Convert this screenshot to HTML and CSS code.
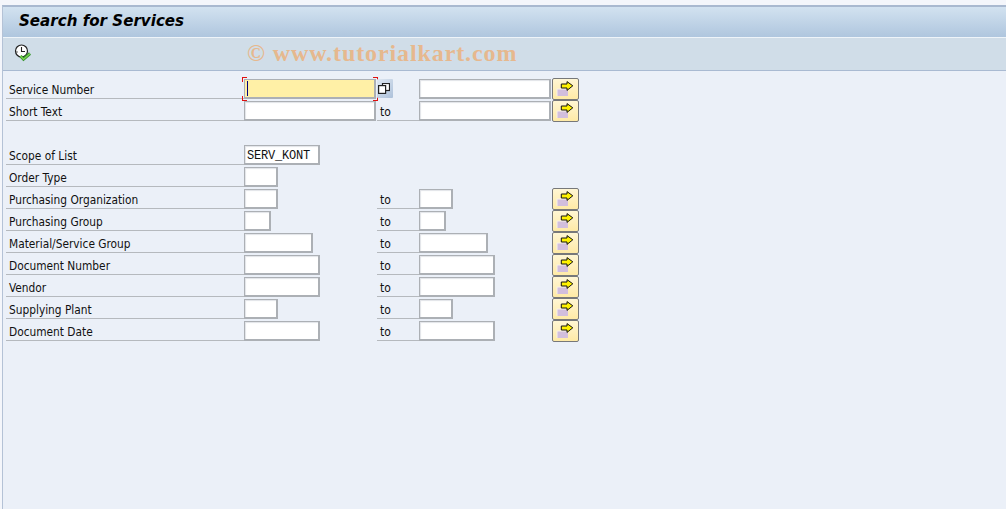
FILE: index.html
```html
<!DOCTYPE html>
<html lang="en">
<head>
<meta charset="utf-8">
<title>Search for Services</title>
<link rel="stylesheet" href="styles.css">
</head>
<body>
<svg class="defs" width="0" height="0" aria-hidden="true">
  <symbol id="multi" viewBox="0 0 18 15">
    <rect x="0.5" y="7.5" width="11.5" height="7.5" fill="#f8f2e6"/>
    <rect x="1.5" y="8.5" width="10.5" height="6.5" fill="#d2bedd"/>
    <path d="M5.3 3H11V0.6L16.8 4.8L11 9.4V7H5.3Z" fill="#fff200" stroke="#111" stroke-width="1"/>
  </symbol>
</svg>
<div class="window">
  <header class="title">Search for Services</header>
  <div class="toolbar">
    <svg class="exec" width="18" height="18" viewBox="0 0 18 18">
      <circle cx="7.5" cy="7" r="6" fill="#fff" stroke="#222" stroke-width="1.2"/>
      <path d="M7.5 3V7.5H11" fill="none" stroke="#222" stroke-width="1.1"/>
      <path d="M2 8H4" stroke="#222" stroke-width="0.7"/>
      <path d="M6.5 12L9.5 15.2L16 9.5" fill="none" stroke="#2f8f2a" stroke-width="3"/>
      <path d="M6.5 12L9.5 15.2L16 9.5" fill="none" stroke="#7ad04f" stroke-width="1.4"/>
    </svg>
    <span class="watermark">© www.tutorialkart.com</span>
  </div>
  <main class="form">
    <div class="row">
      <label class="lbl">Service Number</label>
      <div class="low"><span class="field w132 focus"><i class="caret"></i><b class="c tl"></b><b class="c tr"></b><b class="c bl"></b><b class="c br"></b></span>
        <span class="copy"><svg width="12" height="11" viewBox="0 0 12 11"><rect x="4.5" y="0.5" width="7" height="7" fill="#fff" stroke="#222" stroke-width="1.2"/><rect x="0.6" y="2.6" width="7" height="7.8" fill="#fff" stroke="#222" stroke-width="1.2"/></svg></span></div>
      <div class="tolbl blank"></div>
      <div class="high"><span class="field w132"></span></div>
      <button class="more"><svg width="18" height="15"><use href="#multi"/></svg></button>
    </div>
    <div class="row">
      <label class="lbl">Short Text</label>
      <div class="low"><span class="field w132"></span></div>
      <div class="tolbl">to</div>
      <div class="high"><span class="field w132"></span></div>
      <button class="more"><svg width="18" height="15"><use href="#multi"/></svg></button>
    </div>
    <div class="row"></div>
    <div class="row">
      <label class="lbl">Scope of List</label>
      <div class="low"><span class="field w76 mono">SERV_KONT</span></div>
    </div>
    <div class="row">
      <label class="lbl">Order Type</label>
      <div class="low"><span class="field w34"></span></div>
    </div>
    <div class="row">
      <label class="lbl">Purchasing Organization</label>
      <div class="low"><span class="field w34"></span></div>
      <div class="tolbl">to</div>
      <div class="high"><span class="field w34"></span></div>
      <button class="more"><svg width="18" height="15"><use href="#multi"/></svg></button>
    </div>
    <div class="row">
      <label class="lbl">Purchasing Group</label>
      <div class="low"><span class="field w27"></span></div>
      <div class="tolbl">to</div>
      <div class="high"><span class="field w27"></span></div>
      <button class="more"><svg width="18" height="15"><use href="#multi"/></svg></button>
    </div>
    <div class="row">
      <label class="lbl">Material/Service Group</label>
      <div class="low"><span class="field w69"></span></div>
      <div class="tolbl">to</div>
      <div class="high"><span class="field w69"></span></div>
      <button class="more"><svg width="18" height="15"><use href="#multi"/></svg></button>
    </div>
    <div class="row">
      <label class="lbl">Document Number</label>
      <div class="low"><span class="field w76"></span></div>
      <div class="tolbl">to</div>
      <div class="high"><span class="field w76"></span></div>
      <button class="more"><svg width="18" height="15"><use href="#multi"/></svg></button>
    </div>
    <div class="row">
      <label class="lbl">Vendor</label>
      <div class="low"><span class="field w76"></span></div>
      <div class="tolbl">to</div>
      <div class="high"><span class="field w76"></span></div>
      <button class="more"><svg width="18" height="15"><use href="#multi"/></svg></button>
    </div>
    <div class="row">
      <label class="lbl">Supplying Plant</label>
      <div class="low"><span class="field w34"></span></div>
      <div class="tolbl">to</div>
      <div class="high"><span class="field w34"></span></div>
      <button class="more"><svg width="18" height="15"><use href="#multi"/></svg></button>
    </div>
    <div class="row">
      <label class="lbl">Document Date</label>
      <div class="low"><span class="field w76"></span></div>
      <div class="tolbl">to</div>
      <div class="high"><span class="field w76"></span></div>
      <button class="more"><svg width="18" height="15"><use href="#multi"/></svg></button>
    </div>
  </main>
</div>
</body>
</html>
```
FILE: styles.css
```css
html, body { margin: 0; padding: 0; height: 100%; overflow: hidden; }
body { background: #f4f6fb; font-family: "DejaVu Sans", "Liberation Sans", sans-serif; font-stretch: condensed; color: #111; }
.defs { position: absolute; }
.window {
  margin: 5px 0 0 2px;
  height: 504px;
  box-sizing: border-box;
  border-top: 2px solid #a9b9d0;
  border-left: 1px solid #b4c2d6;
  background: #ebf0f8;
  display: flex;
  flex-direction: column;
}
.title {
  height: 30px;
  box-sizing: border-box;
  padding-left: 16px;
  background: linear-gradient(#d2e2f0, #afc6de);
  font: italic bold 15.1px/29px "DejaVu Sans", sans-serif;
  color: #000;
}
.toolbar {
  height: 34px;
  box-sizing: border-box;
  border-top: 1px solid #eef4f9;
  border-bottom: 1px solid #a9bad2;
  background: #d0dde8;
  display: flex;
  align-items: center;
  padding-left: 11px;
}
.exec { flex: none; margin-bottom: 2px; }
.watermark {
  margin-left: 215px;
  font: bold 24px/28px "Liberation Serif", serif;
  color: #e6b88e;
  letter-spacing: 0.9px;
  margin-bottom: 3px;
}
.form { padding: 6px 0 0 3px; display: flex; flex-direction: column; }
.row { height: 22px; display: flex; }
.lbl {
  width: 238px;
  box-sizing: border-box;
  height: 22px;
  padding: 4px 0 0 3px;
  border-bottom: 1px solid #b5b9be;
  font-size: 11.8px;
  line-height: 18px;
}
.low { width: 133px; display: flex; position: relative; }
.tolbl {
  width: 42px;
  box-sizing: border-box;
  height: 22px;
  padding: 4px 0 0 3px;
  border-bottom: 1px solid #b5b9be;
  font-size: 12px;
  line-height: 18px;
}
.tolbl.blank { border-bottom: 0; }
.high { width: 133px; display: flex; }
.field {
  display: block;
  height: 20px;
  margin-top: 2px;
  box-sizing: border-box;
  background: #fff;
  border: 1px solid #acb0b5;
  border-width: 1px 2px 2px 1px;
  box-shadow: inset 1px 1px 1px #e2e4e8;
  position: relative;
}
.w132 { width: 132px; }
.w76 { width: 76px; }
.w69 { width: 69px; }
.w34 { width: 34px; }
.w27 { width: 27px; }
.mono {
  font: 12px/20px "Liberation Mono", monospace;
  letter-spacing: -0.2px;
  padding-left: 2px;
  color: #111;
}
.focus { background: #fff0a6; box-shadow: none; }
.caret {
  position: absolute;
  left: 2px;
  top: 1px;
  width: 1px;
  height: 15px;
  background: #000080;
}
.c { position: absolute; width: 4px; height: 4px; border: 0 solid #e01010; }
.tl { left: -3px; top: -3px; border-width: 1px 0 0 1px; }
.tr { right: -4px; top: -3px; border-width: 1px 1px 0 0; }
.bl { left: -3px; bottom: -4px; border-width: 0 0 1px 1px; }
.br { right: -4px; bottom: -4px; border-width: 0 1px 1px 0; }
.copy {
  position: absolute;
  left: 133px;
  top: 2px;
  width: 16px;
  height: 19px;
  padding: 4px 0 0 1px;
  box-sizing: border-box;
  background: linear-gradient(135deg, #e0e8f2, #adc1da);
  border-radius: 1px;
  display: flex;
  align-items: flex-start;
  justify-content: flex-start;
}
.more {
  width: 27px;
  height: 22px;
  margin: 1px 0 0 0;
  padding: 2px 0 0 3px;
  box-sizing: border-box;
  border: 1px solid #77787a;
  border-radius: 2px;
  background: linear-gradient(#fff6d4, #ffeaa6);
  display: flex;
  align-items: flex-start;
  justify-content: flex-start;
}
```
